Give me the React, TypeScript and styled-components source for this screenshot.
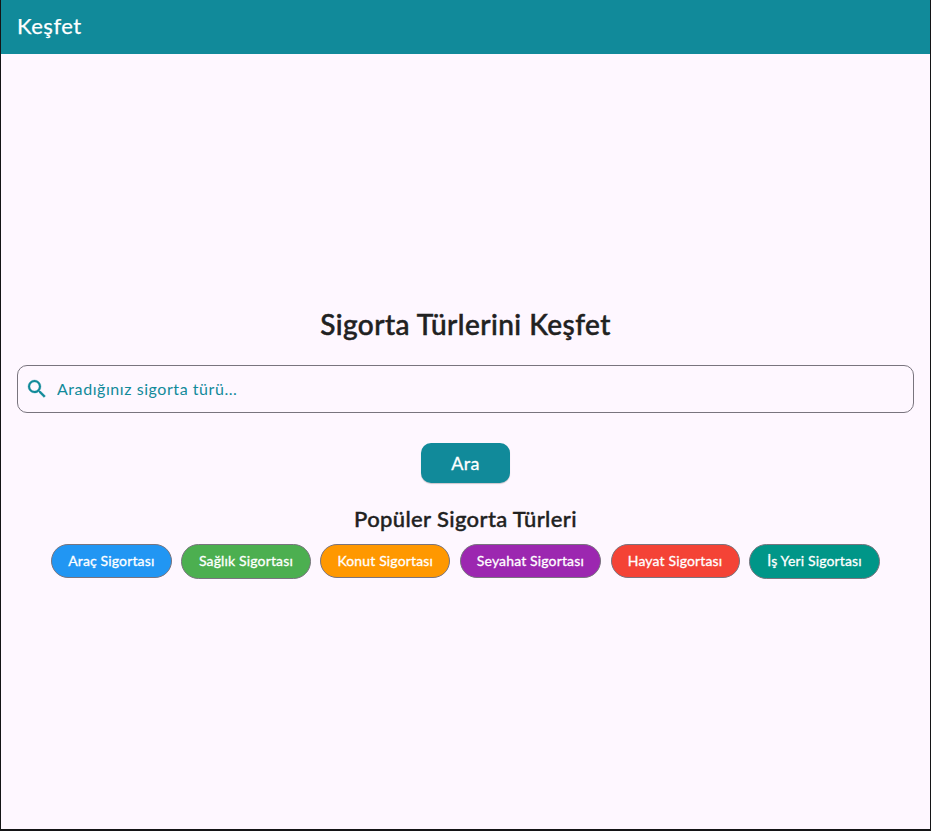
import React from 'react';
import styled, { createGlobalStyle } from 'styled-components';

const GlobalStyle = createGlobalStyle`
  * { box-sizing: border-box; }
  body { margin: 0; font-family: Lato, sans-serif; color: #1d1b20; }
`;

const Window = styled.div`
  display: flex;
  flex-direction: column;
  width: 931px;
  height: 831px;
  background: #fef7ff;
  border: solid #141416;
  border-width: 0 1px 2px 1px;
`;

const AppBar = styled.header`
  flex: none;
  height: 54px;
  padding: 0 16px;
  background: #118a9a;
  color: #fff;
`;

const BarTitle = styled.h1`
  margin: 0;
  font-size: 22px;
  font-weight: 400;
  line-height: 51px;
  letter-spacing: 0.5px;
  -webkit-text-stroke: 0.25px currentColor;
`;

const Main = styled.main`
  display: flex;
  flex-direction: column;
  align-items: center;
  padding: 249px 16px 0;
`;

const Heading = styled.h2`
  margin: 0;
  font-size: 28px;
  font-weight: 500;
  line-height: 42px;
  letter-spacing: 0.46px;
  color: #212121;
  -webkit-text-stroke: 0.5px currentColor;
`;

const SearchField = styled.label`
  display: flex;
  align-items: center;
  width: 897px;
  height: 48px;
  margin-top: 20px;
  padding: 0 7px;
  border: 1px solid #79747e;
  border-radius: 10px;
  color: #118a9a;
`;

const SearchInput = styled.input`
  flex: 1;
  margin-left: 8px;
  padding: 0 0 1px;
  border: 0;
  outline: 0;
  background: transparent;
  font: 400 16px Lato, sans-serif;
  letter-spacing: 0.56px;
  color: inherit;
  &::placeholder { color: #118a9a; opacity: 1; }
`;

const SearchButton = styled.button`
  width: 89px;
  height: 40px;
  margin-top: 30px;
  padding: 0;
  border: 0;
  border-radius: 10px;
  background: #118a9a;
  box-shadow: 0 1px 1px rgba(0, 0, 0, 0.2);
  color: #fff;
  font: 400 18px Lato, sans-serif;
  letter-spacing: 0.4px;
  -webkit-text-stroke: 0.3px currentColor;
`;

const Subheading = styled.h3`
  margin: 22px 0 0;
  font-size: 22px;
  font-weight: 500;
  line-height: 28px;
  letter-spacing: 0.36px;
  color: #212121;
  -webkit-text-stroke: 0.4px currentColor;
`;

const Chips = styled.div`
  display: flex;
  align-items: flex-start;
  gap: 9.6px;
  margin-top: 11px;
`;

const Chip = styled.button<{ $color: string; $width: number; $tall?: boolean }>`
  width: ${p => p.$width}px;
  height: ${p => (p.$tall ? 35 : 34)}px;
  padding: 0 0 ${p => (p.$tall ? 2 : 1)}px;
  border: 1px solid #79747e;
  border-radius: 18px;
  background: ${p => p.$color};
  color: #fff;
  font: 400 14px Lato, sans-serif;
  letter-spacing: 0.15px;
  -webkit-text-stroke: 0.3px currentColor;
  white-space: nowrap;
`;

const types = [
  { label: 'Araç Sigortası', color: '#2196f3', width: 120.6 },
  { label: 'Sağlık Sigortası', color: '#4caf50', width: 129.4, tall: true },
  { label: 'Konut Sigortası', color: '#ff9800', width: 130 },
  { label: 'Seyahat Sigortası', color: '#9c27b0', width: 141.2 },
  { label: 'Hayat Sigortası', color: '#f44336', width: 129 },
  { label: 'İş Yeri Sigortası', color: '#009688', width: 130.8, tall: true },
];

export default function App() {
  return (
    <Window>
      <GlobalStyle />
      <AppBar><BarTitle>Keşfet</BarTitle></AppBar>
      <Main>
        <Heading>Sigorta Türlerini Keşfet</Heading>
        <SearchField>
          <svg width="24" height="24" viewBox="0 0 24 24" fill="currentColor" stroke="currentColor" strokeWidth="0.3">
            <path d="M15.5 14h-.79l-.28-.27A6.47 6.47 0 0 0 16 9.5 6.5 6.5 0 1 0 9.5 16c1.61 0 3.09-.59 4.23-1.57l.27.28v.79l5 4.99L20.49 19l-4.99-5zm-6 0C7.01 14 5 11.99 5 9.5S7.01 5 9.5 5 14 7.01 14 9.5 11.99 14 9.5 14z" />
          </svg>
          <SearchInput placeholder="Aradığınız sigorta türü..." />
        </SearchField>
        <SearchButton>Ara</SearchButton>
        <Subheading>Popüler Sigorta Türleri</Subheading>
        <Chips>
          {types.map(t => (
            <Chip key={t.label} $color={t.color} $width={t.width} $tall={t.tall}>{t.label}</Chip>
          ))}
        </Chips>
      </Main>
    </Window>
  );
}
